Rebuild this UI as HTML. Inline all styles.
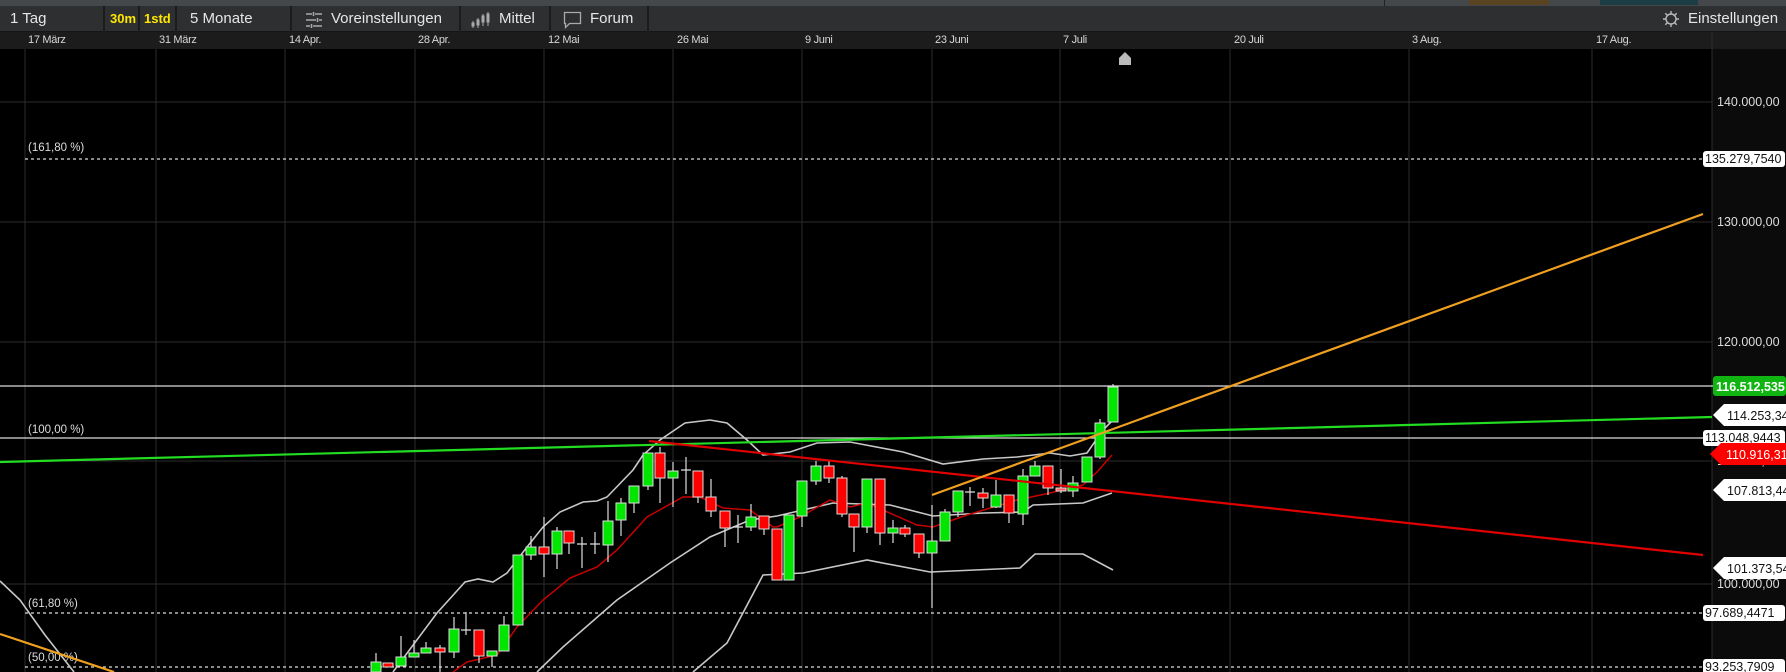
<!DOCTYPE html>
<html><head><meta charset="utf-8"><style>
*{margin:0;padding:0;box-sizing:border-box}
body{width:1786px;height:672px;background:#000;overflow:hidden;font-family:"Liberation Sans",sans-serif;position:relative}
.top{position:absolute;left:0;top:0;width:1786px;height:6px;background:#44484b}
.tb{position:absolute;left:0;top:6px;width:1786px;height:26px;background:#2d2f31;border-bottom:1px solid #151515}
.tb span{position:absolute;top:4px;font-size:15px;color:#e6e6e6}
.sep{position:absolute;top:0;width:2px;height:26px;background:#1b1c1d}
.da{position:absolute;left:0;top:32px;width:1786px;height:17px;background:#1c1c1c}
.da span{position:absolute;top:2px;font-size:11px;color:#d8d8d8;letter-spacing:-0.3px}
svg{position:absolute;left:0;top:0}
</style></head><body>
<div class="top">
<div style="position:absolute;left:1384px;top:0;width:1px;height:6px;background:#222"></div>
<div style="position:absolute;left:1469px;top:0;width:80px;height:5px;background:#5a4320"></div>
<div style="position:absolute;left:1600px;top:0;width:98px;height:5px;background:#1c3d44"></div>
</div>
<div class="tb">
<span style="left:10px">1 Tag</span>
<div class="sep" style="left:103px"></div>
<span style="left:110px;color:#ffe600;font-weight:bold;font-size:13px;top:5px">30m</span>
<div class="sep" style="left:138px"></div>
<span style="left:144px;color:#ffe600;font-weight:bold;font-size:13px;top:5px">1std</span>
<div class="sep" style="left:175px"></div>
<span style="left:190px">5 Monate</span>
<div class="sep" style="left:290px"></div>
<svg style="position:absolute;left:304px;top:6px" width="20" height="16" viewBox="0 0 20 16"><g stroke="#aaa" stroke-width="1.5"><path d="M2 2h6M11 2h7M2 8h10M15 8h3M2 14h4M9 14h9"/><path d="M9.5 0v4M13.5 6v4M7.5 12v4"/></g></svg>
<span style="left:331px">Voreinstellungen</span>
<div class="sep" style="left:459px"></div>
<svg style="position:absolute;left:470px;top:5px" width="22" height="18" viewBox="0 0 22 18"><g stroke="#aaa" fill="none"><path d="M3 10v7M8 7v10M13 3v12M18 1v14"/><rect x="2" y="12" width="2" height="3" fill="#aaa"/><rect x="7" y="9" width="2" height="5" fill="#aaa"/><rect x="12" y="5" width="2" height="6" fill="#aaa"/><rect x="17" y="3" width="2" height="8" fill="#aaa"/></g></svg>
<span style="left:499px">Mittel</span>
<div class="sep" style="left:549px"></div>
<svg style="position:absolute;left:563px;top:5px" width="20" height="18" viewBox="0 0 20 18"><path d="M1.5 1.5h16v11h-11l-4 4v-4h-1z" fill="none" stroke="#aaa" stroke-width="1.3"/></svg>
<span style="left:590px">Forum</span>
<div class="sep" style="left:647px"></div>
<svg style="position:absolute;left:1662px;top:4px" width="18" height="18" viewBox="0 0 18 18"><g stroke="#bbb" stroke-width="1.4" fill="none"><circle cx="9" cy="9" r="5"/><path d="M9 1v3M9 14v3M1 9h3M14 9h3M3.3 3.3l2 2M12.7 12.7l2 2M3.3 14.7l2-2M12.7 5.3l2-2"/></g></svg>
<span style="left:1688px">Einstellungen</span>
</div>
<div class="da">
<span style="left:28px">17 März</span><span style="left:159px">31 März</span><span style="left:289px">14 Apr.</span><span style="left:418px">28 Apr.</span><span style="left:548px">12 Mai</span><span style="left:677px">26 Mai</span><span style="left:805px">9 Juni</span><span style="left:935px">23 Juni</span><span style="left:1063px">7 Juli</span><span style="left:1234px">20 Juli</span><span style="left:1412px">3 Aug.</span><span style="left:1596px">17 Aug.</span>
</div>
<svg width="1786" height="672" viewBox="0 0 1786 672" style="top:0">
<rect x="1712" y="49" width="74" height="623" fill="#0b0b0b"/>
<g stroke="#2c2c2c" stroke-width="1">
<path d="M25 49V672M156 49V672M285 49V672M415 49V672M544 49V672M673 49V672M802 49V672M932 49V672M1060 49V672M1230 49V672M1409 49V672M1592 49V672M1712 32V672"/>
<path d="M0 102H1712M0 222H1712M0 342H1712M0 461H1712M0 584H1712"/>
</g>
<path d="M1119 58l6-6 6 6v7h-12z" fill="#bbb"/>
<g font-size="12.5" fill="#ddd" font-family="Liberation Sans,sans-serif">
<text x="1717" y="106">140.000,00</text>
<text x="1717" y="226">130.000,00</text>
<text x="1717" y="346">120.000,00</text>
<text x="1717" y="465">110.000,00</text>
<text x="1717" y="588">100.000,00</text>
</g>
<g font-size="11.5" fill="#ddd" font-family="Liberation Sans,sans-serif">
<text x="28" y="151">(161,80 %)</text>
<text x="28" y="433">(100,00 %)</text>
<text x="28" y="607">(61,80 %)</text>
<text x="28" y="661">(50,00 %)</text>
</g>
<g stroke="#ddd" stroke-width="1.3" stroke-dasharray="3,3" fill="none">
<path d="M25 159H1703M25 613H1703M25 667H1703"/>
</g>
<path d="M0 386H1714M0 438H1703" stroke="#ddd" stroke-width="1.2"/>
<g fill="none" stroke="#c8c8c8" stroke-width="1.6">
<path d="M0 581L20 600L45 635L74 672"/>
<path d="M393 672L437 613L465 582L478 579L493 582L507 573L527 547L543 527L560 512L583 502L597 501L607 497L633 470L643 455L660 440L685 423L710 420L727 423L747 440L763 455L790 452L817 443L850 442L903 452L943 464L983 459L1017 457L1050 453L1070 456L1087 453L1103 430L1113 420"/>
<path d="M537 672L563 647L617 600L670 563L710 537L750 520L777 516L833 503L890 505L933 516L983 513L1023 512L1033 505L1083 503L1112 493"/>
<path d="M693 672L727 643L763 575L803 573L867 560L930 572L1020 568L1035 554L1083 554L1113 570"/>
</g>
<path d="M453 672L467 662L497 655L517 627L543 600L570 578L597 567L617 550L647 517L683 497L700 497L723 508L750 510L773 527L777 527L800 517L830 500L850 507L867 503L917 525L933 527L967 515L1017 500L1050 493L1083 485L1097 472L1112 455" fill="none" stroke="#c80000" stroke-width="1.5"/>
<g stroke="#ddd" stroke-width="1.2">
<path d="M376 653V672M401 636V666M414 640V657M426 642V653M440 645V672M454 617V658M466 612V635M479 630V663M492 651V667M504 616V651M531 536V560M544 517V577M557 527V569M569 531V554M582 537V568M595 532V554M608 501V562M621 498V536M634 486V513M648 453V490M660 447V503M673 462V507M686 457V494M698 471V503M711 479V517M725 511V547M738 515V543M751 504V531M764 516V535M802 481V527M816 461V485M829 461V483M842 476V517M854 514V552M867 479V533M880 479V545M893 520V543M905 525V537M919 534V558M932 505V608M945 509V541M958 491V517M970 487V506M983 488V508M996 480V508M1009 495V523M1023 469V525M1035 461V476M1048 466V495M1061 469V493M1073 476V497M1100 419V459M1113 384V422"/>
<path d="M461 630H471M577 544H587M590 544H600M681 470H691M733 527H743M965 492H975"/>
</g>
<g stroke="#ddd" stroke-width="1">
<g fill="#00e600">
<rect x="371" y="662" width="10" height="10"/><rect x="396" y="657" width="10" height="9"/><rect x="409" y="653" width="10" height="4"/><rect x="421" y="648" width="10" height="5"/><rect x="449" y="629" width="10" height="23"/><rect x="487" y="651" width="10" height="5"/><rect x="499" y="625" width="10" height="26"/><rect x="513" y="555" width="10" height="70"/><rect x="526" y="547" width="10" height="8"/><rect x="552" y="531" width="10" height="23"/><rect x="603" y="521" width="10" height="24"/><rect x="616" y="503" width="10" height="17"/><rect x="629" y="486" width="10" height="17"/><rect x="643" y="453" width="10" height="33"/><rect x="668" y="471" width="10" height="7"/><rect x="746" y="517" width="10" height="10"/><rect x="784" y="515" width="10" height="65"/><rect x="797" y="481" width="10" height="35"/><rect x="811" y="466" width="10" height="15"/><rect x="862" y="479" width="10" height="48"/><rect x="888" y="528" width="10" height="5"/><rect x="927" y="541" width="10" height="12"/><rect x="940" y="512" width="10" height="29"/><rect x="953" y="491" width="10" height="21"/><rect x="991" y="495" width="10" height="12"/><rect x="1018" y="476" width="10" height="38"/><rect x="1030" y="466" width="10" height="10"/><rect x="1068" y="483" width="10" height="8"/><rect x="1082" y="457" width="10" height="25"/><rect x="1095" y="423" width="10" height="34"/><rect x="1108" y="387" width="10" height="35"/>
</g>
<g fill="#ff0000">
<rect x="383" y="663" width="10" height="4"/><rect x="435" y="648" width="10" height="4"/><rect x="474" y="630" width="10" height="26"/><rect x="539" y="547" width="10" height="7"/><rect x="564" y="531" width="10" height="12"/><rect x="655" y="453" width="10" height="25"/><rect x="693" y="471" width="10" height="26"/><rect x="706" y="497" width="10" height="14"/><rect x="720" y="511" width="10" height="17"/><rect x="759" y="516" width="10" height="13"/><rect x="772" y="529" width="10" height="51"/><rect x="824" y="466" width="10" height="12"/><rect x="837" y="478" width="10" height="36"/><rect x="849" y="514" width="10" height="13"/><rect x="875" y="479" width="10" height="54"/><rect x="900" y="528" width="10" height="6"/><rect x="914" y="534" width="10" height="19"/><rect x="978" y="493" width="10" height="5"/><rect x="1004" y="495" width="10" height="18"/><rect x="1043" y="466" width="10" height="22"/><rect x="1056" y="488" width="10" height="3" fill="#ff6060"/>
</g>
</g>
<path d="M0 462L1712 417" stroke="#22dd22" stroke-width="2.2"/>
<path d="M649 441L1703 555" stroke="#e00000" stroke-width="2.2"/>
<path d="M932 495L1703 214" stroke="#f0a020" stroke-width="2.2"/>
<path d="M0 634L114 672" stroke="#f0a020" stroke-width="2.2"/>
<g font-size="12.5" font-family="Liberation Sans,sans-serif">
<rect x="1703" y="151" width="82" height="16" rx="3" fill="#fff"/><text x="1705" y="163" fill="#111">135.279,7540</text>
<rect x="1713" y="376" width="73" height="20" rx="3" fill="#11b511"/><text x="1716" y="391" fill="#fff" font-weight="bold">116.512,535</text>
<path d="M1713 415l11-11h62v22h-62z" fill="#fff"/><text x="1727" y="420" fill="#111">114.253,34</text>
<rect x="1703" y="430" width="82" height="16" rx="3" fill="#fff"/><text x="1705" y="442" fill="#111">113.048,9443</text>
<path d="M1710 454l11-11h65v22h-65z" fill="#f00"/><text x="1726" y="459" fill="#fff">110.916,31</text>
<path d="M1713 490l11-11h62v22h-62z" fill="#fff"/><text x="1727" y="495" fill="#111">107.813,44</text>
<path d="M1713 568l11-11h62v22h-62z" fill="#fff"/><text x="1727" y="573" fill="#111">101.373,54</text>
<rect x="1703" y="605" width="82" height="16" rx="3" fill="#fff"/><text x="1705" y="617" fill="#111">97.689,4471</text>
<rect x="1703" y="659" width="82" height="16" rx="3" fill="#fff"/><text x="1705" y="671" fill="#111">93.253,7909</text>
</g>
</svg>
</body></html>
